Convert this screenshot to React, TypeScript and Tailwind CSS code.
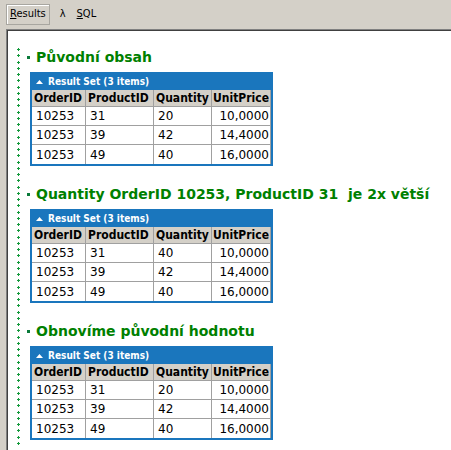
import React from "react";

type Row = [string, string, string, string];

const SECTIONS: { title: string; rows: Row[] }[] = [
  {
    title: "Původní obsah",
    rows: [
      ["10253", "31", "20", "10,0000"],
      ["10253", "39", "42", "14,4000"],
      ["10253", "49", "40", "16,0000"],
    ],
  },
  {
    title: "Quantity OrderID 10253, ProductID 31  je 2x větší",
    rows: [
      ["10253", "31", "40", "10,0000"],
      ["10253", "39", "42", "14,4000"],
      ["10253", "49", "40", "16,0000"],
    ],
  },
  {
    title: "Obnovíme původní hodnotu",
    rows: [
      ["10253", "31", "20", "10,0000"],
      ["10253", "39", "42", "14,4000"],
      ["10253", "49", "40", "16,0000"],
    ],
  },
];

const COLS = ["OrderID", "ProductID", "Quantity", "UnitPrice"];
const WIDTHS = ["w-[54px]", "w-[68px]", "w-[58px]", "w-[59px]"];

function Pluses() {
  const ys = Array.from({ length: 64 }, (_, i) => Math.round(i * 6.25));
  return (
    <svg width="3" height="400" className="shrink-0 mt-[17px] ml-[9px]">
      {ys.map(y => (
        <g key={y} fill="#149a3c">
          <rect x="1" y={y} width="1" height="3" />
          <rect x="0" y={y + 1} width="3" height="1" />
        </g>
      ))}
    </svg>
  );
}

function ResultTable({ rows }: { rows: Row[] }) {
  return (
    <div className="ml-[3px] mt-[5px] w-[243px] border-2 border-[#1a76bd] bg-white">
      <div className="h-[16px] bg-[#1a76bd] flex items-center gap-[5px] pl-[4px] text-white text-[10px] font-bold font-stretch-condensed leading-none">
        <svg width="7" height="4" viewBox="0 0 7 4">
          <polygon points="3.5,0 7,4 0,4" fill="#fff" />
        </svg>
        <span>Result Set (3 items)</span>
      </div>
      <div className="flex h-[17px] bg-[#d4d0c8] text-[12px] font-bold font-stretch-condensed text-black">
        {COLS.map((c, i) => (
          <div
            key={c}
            className={`${WIDTHS[i]} border-r border-b border-[#a0a0a0] flex items-center ${i === 3 ? "justify-end pr-[1px]" : "pl-[2px]"}`}
          >
            {c}
          </div>
        ))}
      </div>
      {rows.map((r, ri) => (
        <div key={ri} className="flex h-[19px] text-[12px] text-black">
          {r.map((v, i) => (
            <div
              key={i}
              className={`${WIDTHS[i]} border-r border-b border-[#a0a0a0] flex items-center ${i === 3 ? "justify-end pr-[1px]" : "pl-[4px]"} ${ri === rows.length - 1 ? "border-b-0" : ""}`}
            >
              {v}
            </div>
          ))}
        </div>
      ))}
    </div>
  );
}

export default function App() {
  return (
    <div className="w-[451px] h-[450px] overflow-hidden bg-[#d4d0c8] flex flex-col" style={{ fontFamily: '"DejaVu Sans", Verdana, sans-serif' }}>
      {/* toolbar */}
      <div className="h-[29px] shrink-0 flex items-start pt-[4px] pl-[6px] text-[11px] text-black font-stretch-condensed">
        <div className="h-[21px] px-[3px] flex items-center border border-[#a8a6a0] shadow-[inset_1px_1px_0_#fff]">
          <span><span className="underline">R</span>esults</span>
        </div>
        <div className="h-[21px] flex items-center ml-[10px]">λ</div>
        <div className="h-[21px] flex items-center ml-[11px]">
          <span><span className="underline">S</span>QL</span>
        </div>
      </div>

      {/* results panel */}
      <div className="flex-1 ml-[6px] border-t border-l border-[#808080]">
        <div className="h-full border-t border-l border-[#404040] bg-white flex items-start">
          <Pluses />
          <div className="flex flex-col pt-[16px] ml-[7px]">
            {SECTIONS.map(s => (
              <div key={s.title} className="flex flex-col mb-[18px]">
                <div className="h-[20px] flex items-center gap-[6px]">
                  <div className="w-[3px] h-[3px] bg-[#0a7a3a]" />
                  <span className="text-[14px] leading-[20px] font-bold text-[#008000] whitespace-pre">{s.title}</span>
                </div>
                <ResultTable rows={s.rows} />
              </div>
            ))}
          </div>
        </div>
      </div>
    </div>
  );
}
